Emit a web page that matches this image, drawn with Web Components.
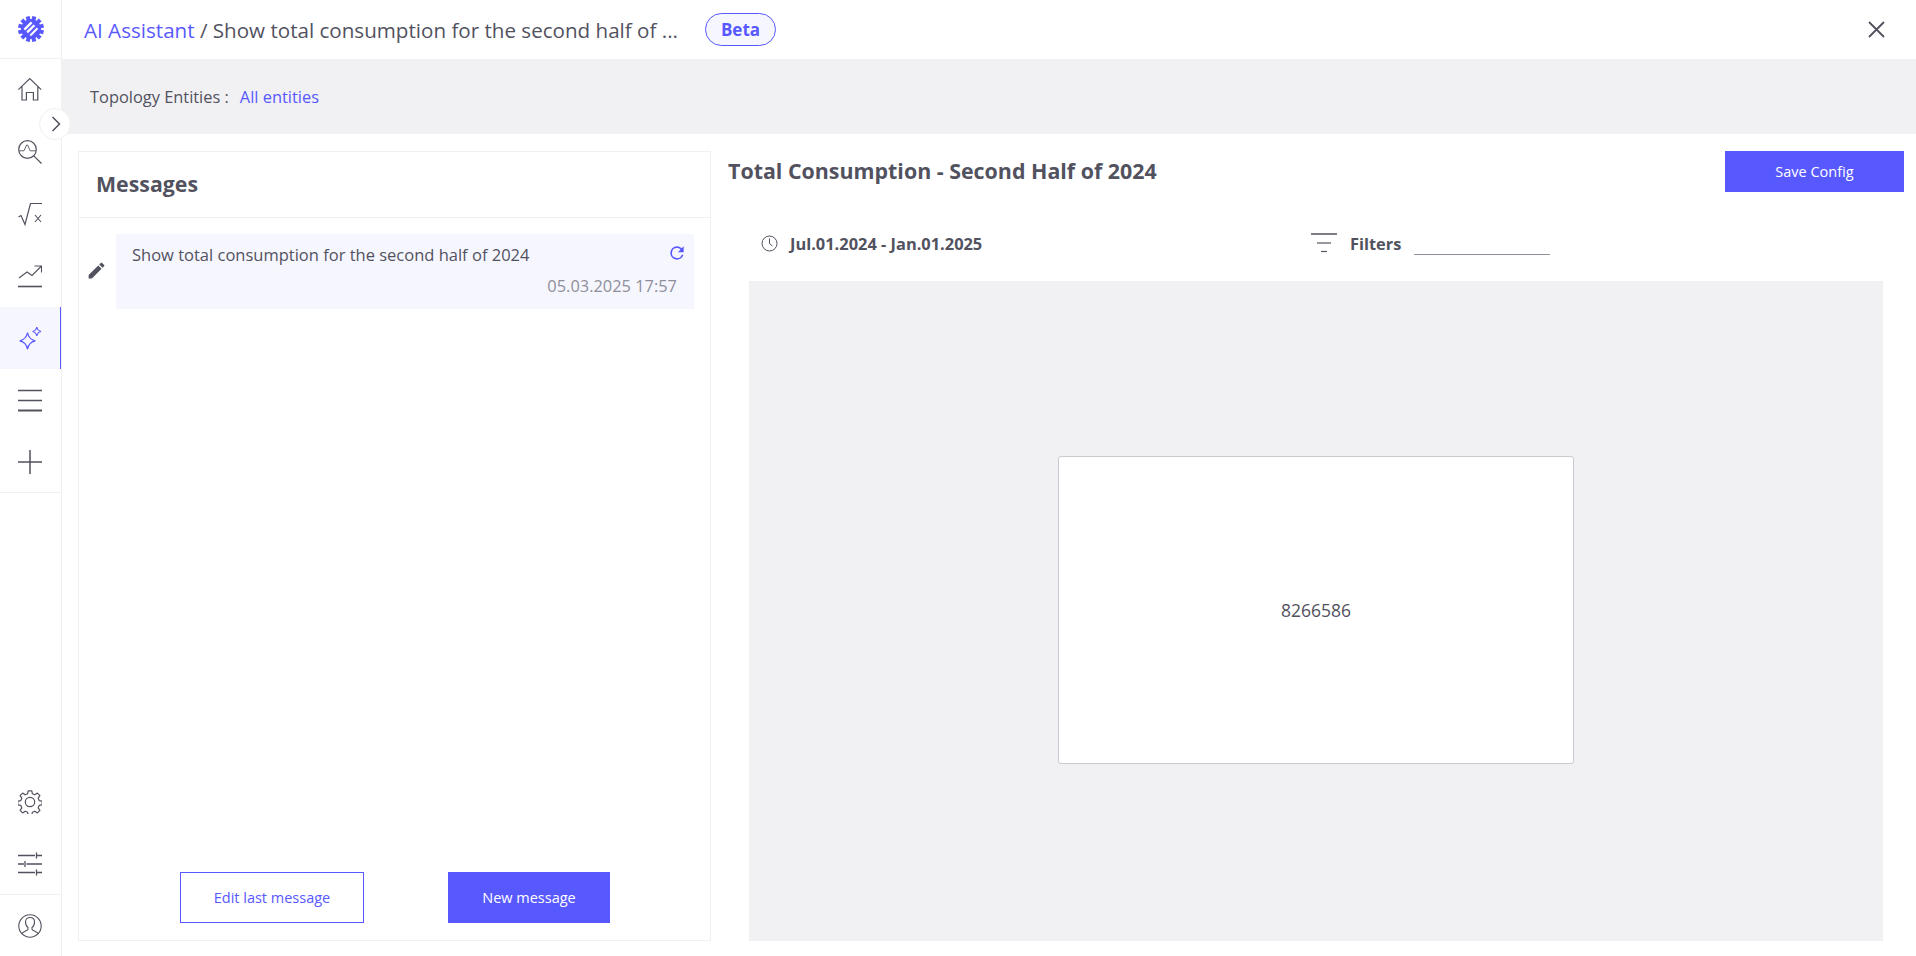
<!DOCTYPE html>
<html>
<head>
<meta charset="utf-8">
<title>AI Assistant</title>
<style>
html, body { margin: 0; height: 100%; overflow: hidden; background: #fff; }
body { font-family: 'Open Sans', 'Noto Sans', sans-serif; color: #52525f; }
</style>
</head>
<body>
<app-shell>
    <app-sidebar slot="side"></app-sidebar>
    <top-bar slot="main"></top-bar>
    <scope-bar slot="main"></scope-bar>
    <div slot="main" style="flex:1;display:flex;min-height:0;">
        <messages-panel>
            <message-item text="Show total consumption for the second half of 2024" time="05.03.2025 17:57"></message-item>
        </messages-panel>
        <result-panel heading="Total Consumption - Second Half of 2024" range="Jul.01.2024 - Jan.01.2025" value="8266586"></result-panel>
    </div>
</app-shell>

<script>
const STROKE = '#52525f';
const PRIMARY = '#5858ff';

// sidebar line icons, 24 box
const ICONS = {
    home: '<path d="M.4 11.600 11.800.6l11.400 11M4 8.500V22h4.400v-7.500h7V22h4.400V8.500" stroke-width="1.200"/>',
    search: '<circle cx="9.500" cy="9.500" r="8.800" stroke-width="1.200"/><path d="M1 10.800h5l2.600-5.800h1l2.600 5.800H18" stroke-width=".9"/><path d="M15.800 15.800 23.500 23.500" stroke-width="1.200"/>',
    sqrt: '<path d="M.5 15 3 13.500l4 9L12.500 1.500H24" stroke-width="1.200"/><path d="M17 13l6 7M23 13l-6 7" stroke-width="1.100"/>',
    trend: '<path d="M1 14 9 8l5 3.500L23 2.500M16.500 2H23.500V8.500" stroke-width="1.100"/><path d="M0 22.500h24" stroke-width="1.600"/>',
    sparkle: '<path d="M9.500 6.500c.9 5 2.900 7.300 7.800 8.300-4.900 1-6.900 3.300-7.800 8.300-.9-5-2.900-7.300-7.800-8.300 4.900-1 6.900-3.300 7.800-8.300z" stroke-width="1.200"/><path d="M18.800 1c.5 2.800 1.500 3.900 4.200 4.500-2.700.6-3.700 1.700-4.200 4.500-.5-2.800-1.500-3.900-4.200-4.500 2.700-.6 3.700-1.700 4.200-4.500z" stroke-width="1.200"/>',
    list: '<path d="M0 2.500h24M0 12.500h24" stroke-width="1.500"/><path d="M0 22.500h24" stroke-width="2"/>',
    plus: '<path d="M12 0v24M0 12h24" stroke-width="1.500"/>',
    gear: '<path d="M10.200.8h3.600l.6 3 2.400 1 2.600-1.700 2.500 2.500-1.700 2.600 1 2.400 3 .6v3.600l-3 .6-1 2.400 1.700 2.600-2.500 2.500-2.600-1.700-2.400 1-.6 3h-3.600l-.6-3-2.400-1-2.600 1.700-2.500-2.500 1.700-2.600-1-2.400-3-.6v-3.600l3-.6 1-2.400-1.700-2.600 2.500-2.500 2.600 1.700 2.400-1z" stroke-width="1.200" stroke-linejoin="round"/><circle cx="12" cy="12" r="4.700" stroke-width="1.200"/>',
    sliders: '<path d="M0 3.500h17M19 3.500h5M18.500.5v6M0 12h6M8.500 12h15.500M7 9v6M0 20.500h17M19 20.500h5M18.500 17.500v6" stroke-width="1.300"/>',
    user: '<circle cx="12" cy="12" r="11.200" stroke-width="1.100"/><path d="M3.500 20c1-2.700 6-3.200 6.500-4.700v-1.800c-1.500-1-2.500-3-2.500-5.500 0-3 2-4.500 4.500-4.500s4.500 1.500 4.500 4.500c0 2.500-1 4.500-2.500 5.500v1.800c.5 1.500 5.500 2 6.500 4.700" stroke-width="1.100"/>'
};

class AppShell extends HTMLElement {
    connectedCallback() {
        const shadow = this.attachShadow({ mode: 'open' });
        shadow.innerHTML = `
<style>
:host { display: flex; width: 1916px; height: 956px; overflow: hidden; position: relative; }
.main { flex: 1; min-width: 0; display: flex; flex-direction: column; }
#toggle {
    position: absolute;
    left: 39px;
    top: 108px;
    width: 32px;
    height: 32px;
    box-sizing: border-box;
    border-radius: 50%;
    background: #fff;
    border: 1px solid #f0f0f2;
    display: flex;
    align-items: center;
    justify-content: center;
    padding-left: 1px;
}
</style>
<slot name="side"></slot>
<div class="main"><slot name="main"></slot></div>
<div id="toggle"><svg width="10" height="16" viewBox="0 0 10 16" fill="none" stroke="${STROKE}" stroke-width="1.500"><path d="M1.500 1 8.500 8l-7 7"/></svg></div>`;
    }
}

class AppSidebar extends HTMLElement {
    connectedCallback() {
        const shadow = this.attachShadow({ mode: 'open' });
        const item = (name, active) => `
<div class="item ${active ? 'active' : ''}">
    <svg width="24" height="24" viewBox="0 0 24 24" fill="none" stroke="${active ? PRIMARY : STROKE}" stroke-width="1">${ICONS[name]}</svg>
</div>`;
        // teeth around the logo disc
        const teeth = [];
        for (let i = 0; i < 12; i++) {
            teeth.push(`<rect x="11" y="0" width="4" height="5" transform="rotate(${i * 30 + 15} 13 13)"/>`);
        }
        shadow.innerHTML = `
<style>
:host {
    display: flex;
    flex-direction: column;
    width: 62px;
    height: 956px;
    box-sizing: border-box;
    border-right: 1px solid #f0f0f2;
    flex: none;
}
.logo { height: 59px; flex: none; display: flex; align-items: center; justify-content: center; border-bottom: 1px solid #f0f0f2; box-sizing: border-box; }
.item { height: 62px; flex: none; display: flex; align-items: center; justify-content: center; box-sizing: border-box; padding-right: 2px; }
.item.active { background: #f6f6ff; border-right: 1px solid ${PRIMARY}; padding-right: 1px; }
.group { border-bottom: 1px solid #f0f0f2; }
.spacer { flex: 1; }
.group .item:last-child { height: 61px; }
.bottom .item:last-child { height: 61px; }
</style>
<div class="logo">
    <svg width="26" height="26" viewBox="0 0 26 26" fill="${PRIMARY}">
        ${teeth.join('')}
        <circle cx="13" cy="13" r="10"/>
        <path fill="#fff" d="M5.600 12.800 12.800 5.600l1.600 1.600-7.200 7.200zM8.400 15.600l7.200-7.200 1.600 1.600-7.200 7.200zM11.600 18.800l7.200-7.200 1.400 1.400-7.200 7.200z"/>
    </svg>
</div>
<div class="group">
    ${item('home')}${item('search')}${item('sqrt')}${item('trend')}${item('sparkle', true)}${item('list')}${item('plus')}
</div>
<div class="spacer"></div>
<div class="group">${item('gear')}${item('sliders')}</div>
<div class="bottom">${item('user')}</div>`;
    }
}

class TopBar extends HTMLElement {
    connectedCallback() {
        const shadow = this.attachShadow({ mode: 'open' });
        shadow.innerHTML = `
<style>
:host { display: flex; align-items: center; height: 59px; flex: none; padding: 0 31px 0 22px; box-sizing: border-box; font-size: 20.600px; color: #52525f; }
.crumb { color: ${PRIMARY}; }
.sep { white-space: pre; }
.beta {
    margin-left: 27px;
    width: 71px;
    height: 33px;
    box-sizing: border-box;
    border: 1px solid ${PRIMARY};
    border-radius: 17px;
    background: #f6f6ff;
    color: ${PRIMARY};
    font-size: 17px;
    font-weight: 700;
    display: flex;
    align-items: center;
    justify-content: center;
}
.close { margin-left: auto; display: flex; }
</style>
<span class="crumb">AI Assistant</span><span class="sep"> / Show total consumption for the second half of ...</span>
<span class="beta">Beta</span>
<span class="close"><svg width="17" height="17" viewBox="0 0 17 17" fill="none" stroke="${STROKE}" stroke-width="1.800"><path d="M1 1l15 15M16 1 1 16"/></svg></span>`;
    }
}

class ScopeBar extends HTMLElement {
    connectedCallback() {
        const shadow = this.attachShadow({ mode: 'open' });
        shadow.innerHTML = `
<style>
:host { display: flex; align-items: center; height: 75px; flex: none; background: #f1f1f3; padding-left: 28px; font-size: 16.400px; color: #52525f; }
a { color: ${PRIMARY}; margin-left: 11px; text-decoration: none; }
</style>
<span>Topology Entities :</span><a>All entities</a>`;
    }
}

class MessagesPanel extends HTMLElement {
    connectedCallback() {
        const shadow = this.attachShadow({ mode: 'open' });
        shadow.innerHTML = `
<style>
:host {
    display: flex;
    flex-direction: column;
    flex: none;
    width: 633px;
    margin: 17px 0 15px 16px;
    box-sizing: border-box;
    border: 1px solid #f0f0f2;
}
h2 { margin: 0; height: 66px; line-height: 64px; box-sizing: border-box; padding-left: 17px; font-size: 21.330px; font-weight: 700; border-bottom: 1px solid #f0f0f2; color: #52525f; flex: none; }
.list { flex: 1; padding: 16px 0 0 0; }
.actions { display: flex; justify-content: flex-start; padding: 0 0 17px 101px; gap: 84px; flex: none; }
button { height: 51px; box-sizing: border-box; font: 400 14.500px 'Open Sans', sans-serif; border: 1px solid ${PRIMARY}; padding: 0; }
.ghost { width: 184px; background: #fff; color: ${PRIMARY}; }
.solid { width: 162px; background: ${PRIMARY}; color: #fff; }
</style>
<h2>Messages</h2>
<div class="list"><slot></slot></div>
<div class="actions"><button class="ghost">Edit last message</button><button class="solid">New message</button></div>`;
    }
}

class MessageItem extends HTMLElement {
    connectedCallback() {
        const shadow = this.attachShadow({ mode: 'open' });
        shadow.innerHTML = `
<style>
:host { display: flex; align-items: center; padding-left: 7px; }
.edit { width: 30px; flex: none; display: flex; margin-top: -2px; }
.bubble { width: 578px; height: 75px; background: #f6f6fe; box-sizing: border-box; padding: 9px 9px 0 16px; position: relative; }
.text { font-size: 16.500px; line-height: 24px; color: #52525f; }
.time { font-size: 16.400px; line-height: 24px; color: #8f8f9a; text-align: right; margin: 7px 8px 0 0; }
.refresh { position: absolute; right: 7px; top: 9px; display: flex; }
</style>
<span class="edit"><svg width="21" height="21" viewBox="0 0 24 24" fill="#52525f"><path d="M3 17.250V21h3.750L17.810 9.940l-3.750-3.750L3 17.250zM20.710 7.040a1 1 0 0 0 0-1.410l-2.340-2.340a1 1 0 0 0-1.410 0l-1.830 1.830 3.750 3.750 1.830-1.830z"/></svg></span>
<div class="bubble">
    <div class="text">${this.getAttribute('text')}</div>
    <div class="time">${this.getAttribute('time')}</div>
    <span class="refresh"><svg width="20" height="20" viewBox="0 0 24 24" fill="${PRIMARY}"><path d="M17.650 6.350A7.960 7.960 0 0 0 12 4a8 8 0 1 0 7.730 10h-2.080A6 6 0 1 1 12 6c1.660 0 3.140.690 4.220 1.780L13 11h7V4l-2.350 2.350z"/></svg></span>
</div>`;
    }
}

class ResultPanel extends HTMLElement {
    connectedCallback() {
        const shadow = this.attachShadow({ mode: 'open' });
        shadow.innerHTML = `
<style>
:host { display: flex; flex-direction: column; flex: 1; min-width: 0; padding: 17px 12px 15px 17px; box-sizing: border-box; }
.head { display: flex; justify-content: space-between; align-items: flex-start; height: 41px; flex: none; }
h1 { margin: 0; font-size: 21.400px; font-weight: 700; line-height: 40px; color: #52525f; height: 41px; }
.save { width: 179px; height: 41px; border: 0; background: ${PRIMARY}; color: #fff; font: 400 14.500px 'Open Sans', sans-serif; padding: 0; }
.filters { display: flex; align-items: center; height: 48px; margin-top: 27px; padding-left: 33px; flex: none; font-size: 16.400px; font-weight: 700; }
.range { display: flex; align-items: center; gap: 12px; width: 550px; flex: none; }
.filter { display: flex; align-items: center; gap: 13px; }
.line { width: 136px; height: 24px; border-bottom: 1px solid #8f8f9a; box-sizing: border-box; }
.canvas { flex: 1; background: #f1f1f3; margin: 14px 21px 0 21px; display: flex; align-items: center; justify-content: center; padding-bottom: 2px; }
.card { width: 516px; height: 308px; box-sizing: border-box; background: #fff; border: 1px solid #c9c9cf; border-radius: 3px; display: flex; align-items: center; justify-content: center; font-size: 17.500px; color: #52525f; }
</style>
<div class="head"><h1>${this.getAttribute('heading')}</h1><button class="save">Save Config</button></div>
<div class="filters">
    <div class="range">
        <svg width="17" height="17" viewBox="0 0 17 17" fill="none" stroke="${STROKE}" stroke-width="1"><circle cx="8.500" cy="8.500" r="7.500"/><path d="M8.500 3.500v5l3 2.500"/></svg>
        <span>${this.getAttribute('range')}</span>
    </div>
    <div class="filter">
        <svg width="26" height="20" viewBox="0 0 26 20" fill="none" stroke="${STROKE}"><path d="M0 1h26" stroke-width="1.500"/><path d="M6 10h14" stroke-width="1.200"/><path d="M10 18.500h6" stroke-width="1.200"/></svg>
        <span>Filters</span>
        <div class="line"></div>
    </div>
</div>
<div class="canvas"><div class="card">${this.getAttribute('value')}</div></div>`;
    }
}

customElements.define('app-shell', AppShell);
customElements.define('app-sidebar', AppSidebar);
customElements.define('top-bar', TopBar);
customElements.define('scope-bar', ScopeBar);
customElements.define('messages-panel', MessagesPanel);
customElements.define('message-item', MessageItem);
customElements.define('result-panel', ResultPanel);
</script>
</body>
</html>
